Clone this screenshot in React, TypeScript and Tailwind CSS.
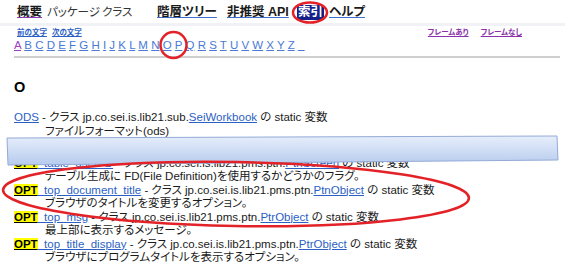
import React from "react";

const F = "font-['Liberation_Sans','Noto_Sans_CJK_JP',sans-serif] [font-feature-settings:'palt']";
const LINK = "text-[#2c5fc4] underline decoration-[#2c5fc4]";

function Opt({ name, cls, desc }: { name: string; cls: string; desc: string }) {
  return (
    <>
      <div className="whitespace-nowrap">
        <span className="bg-[#ffff00] font-bold text-black underline">OPT</span>
        <span className={LINK}>{name}</span>
        {" - クラス jp.co.sei.is.lib21.pms.ptn."}
        <span className={LINK}>{cls}</span>
        {" の static 変数"}
      </div>
      <div className="ml-[31px] whitespace-nowrap">{desc}</div>
    </>
  );
}

export default function App() {
  const letters = "ABCDEFGHIJKLMNOPQRSTUVWXYZ_".split("");
  return (
    <div className={`relative w-[565px] h-[262px] overflow-hidden bg-white text-[#1a1a1a] ${F}`}>
      {/* nav bar */}
      <div className="flex h-[23px] items-start pt-[5px] pl-[17px] text-[12.5px] leading-[15px] whitespace-nowrap">
        <div className="w-[30px]"><span className="font-bold underline decoration-[#8a3ab9]">概要</span></div>
        <div className="w-[55px]"><span className="text-[11.5px] text-[#333]">パッケージ</span></div>
        <div className="w-[55px]"><span className="text-[11.5px] text-[#333]">クラス</span></div>
        <div className="w-[70px]"><span className="font-bold underline decoration-[#3d6fd0]">階層ツリー</span></div>
        <div className="w-[70px]"><span className="font-bold underline decoration-[#3d6fd0]">非推奨 API</span></div>
        <div className="w-[27px] bg-[#14208a] text-center font-bold text-white">索引</div>
        <div className="ml-[5px]"><span className="font-bold underline decoration-[#3d6fd0]">ヘルプ</span></div>
      </div>
      <div className="h-[3px] bg-[#f1f2f6]" />
      {/* prev/next + frames */}
      <div className="mt-[2px] flex justify-between pl-[17px] pr-[43px] text-[7.5px] leading-[10px] font-bold">
        <div className="flex gap-[5px]">
          <span className={LINK}>前の文字</span>
          <span className={LINK}>次の文字</span>
        </div>
        <div className="flex gap-[12px]">
          <span className="text-[#8a2fa8] underline">フレームあり</span>
          <span className="text-[#8a2fa8] underline">フレームなし</span>
        </div>
      </div>
      {/* letters */}
      <div className="pl-[14px] text-[11.5px] leading-[14px] whitespace-nowrap">
        {letters.map((l, i) => (
          <React.Fragment key={l}>
            <span className={i === 0 ? "text-[#9a3fc0] underline" : "text-[#4a7ad6] underline"}>{l}</span>
            {" "}
          </React.Fragment>
        ))}
      </div>
      <div className="mt-[4px] ml-[14px] mr-[5px] h-[2px] bg-[#cfcfcf]" />
      {/* heading */}
      <div className="mt-[21px] pl-[14px] text-[14.5px] font-bold leading-[16px] text-black">O</div>
      {/* entries */}
      <div className="mt-[16px] pl-[14px] text-[11.5px] leading-[13.5px]">
        <div className="whitespace-nowrap">
          <span className={LINK}>ODS</span>
          {" - クラス jp.co.sei.is.lib21.sub."}
          <span className={LINK}>SeiWorkbook</span>
          {" の static 変数"}
        </div>
        <div className="ml-[31px] whitespace-nowrap">ファイルフォーマット(ods)</div>
        <div className="h-[18.5px] whitespace-nowrap">
          <span className="bg-[#ffff00] font-bold text-black underline">OPT</span>
          <span className={LINK}>_table_prefix</span>
          {" - クラス jp.co.sei.is.lib21.pms.ptn."}
          <span className={LINK}>PtnScreen</span>
          {" の static 変数"}
        </div>
        <Opt name="_table_userFD" cls="PtnScreen" desc="テーブル生成に FD(File Definition)を使用するかどうかのフラグ。" />
        <Opt name="_top_document_title" cls="PtnObject" desc="ブラウザのタイトルを変更するオプション。" />
        <Opt name="_top_msg" cls="PtrObject" desc="最上部に表示するメッセージ。" />
        <Opt name="_top_title_display" cls="PtrObject" desc="ブラウザにプログラムタイトルを表示するオプション。" />
      </div>
      {/* annotation overlay */}
      <svg className="pointer-events-none absolute left-0 top-0" width="565" height="262" viewBox="0 0 565 262">
        <defs>
          <linearGradient id="bn" x1="0" y1="0" x2="0" y2="1">
            <stop offset="0" stopColor="#e6eefb" />
            <stop offset="1" stopColor="#b7cbee" />
          </linearGradient>
        </defs>
        <polygon points="7,138 557,136 558,160 8,165" fill="url(#bn)" stroke="#93aad6" strokeWidth="1" />
        <ellipse cx="310" cy="12.5" rx="17" ry="10" fill="none" stroke="#e32228" strokeWidth="2.5" />
        <circle cx="173.5" cy="45" r="13" fill="none" stroke="#e32228" strokeWidth="2.5" />
        <ellipse cx="236" cy="194" rx="233" ry="32" transform="rotate(1 236 194)" fill="none" stroke="#e32228" strokeWidth="2.5" />
      </svg>
    </div>
  );
}
